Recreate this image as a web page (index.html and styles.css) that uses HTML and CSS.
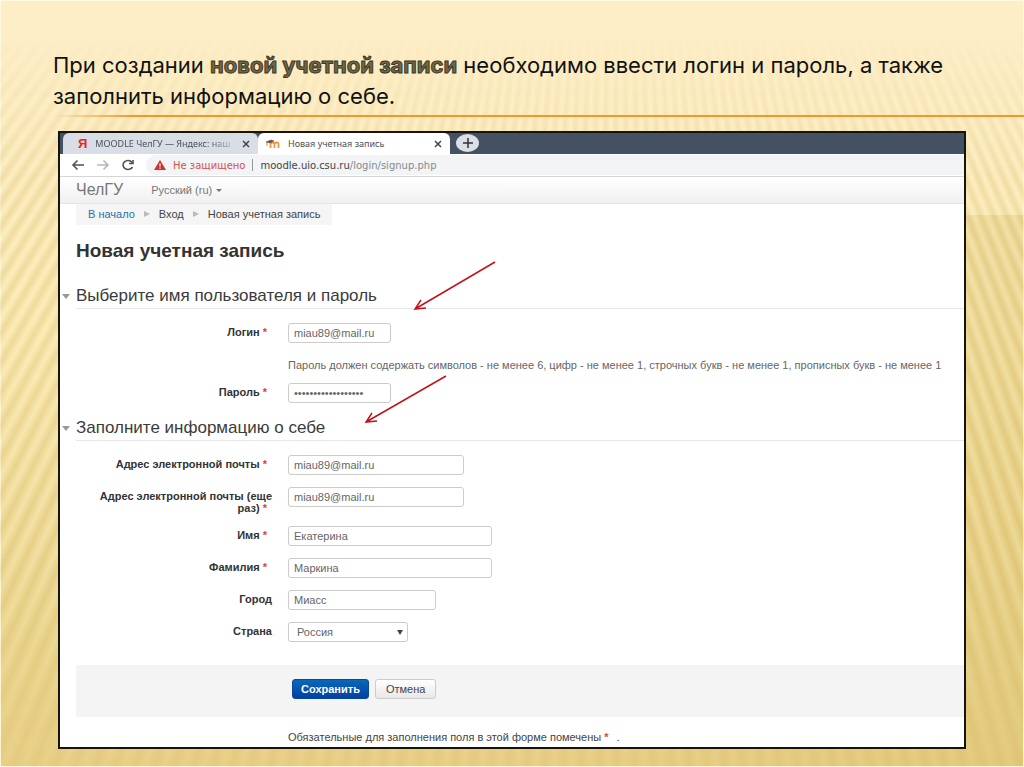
FILE: index.html
```
<!DOCTYPE html>
<html lang="ru">
<head>
<meta charset="utf-8">
<title>Новая учетная запись</title>
<link rel="stylesheet" href="styles.css">
</head>
<body>
<main class="slide">
  <h1 class="slide-title">При создании <strong>новой учетной записи</strong> необходимо ввести логин и пароль, а также заполнить информацию о себе.</h1>
  <div class="rule"></div>
  <section class="window">
    <div class="tabs">
      <div class="tab">
        <span class="yandex">Я</span>
        <span class="tab-name fade">MOODLE ЧелГУ — Яндекс: наш</span>
        <button class="close" aria-label="Закрыть"><svg viewBox="0 0 8 8"><path d="M1 1l6 6M7 1l-6 6"/></svg></button>
      </div>
      <div class="tab active">
        <svg class="moodle" viewBox="0 0 14 10"><path d="M4.500 9V5.500q0-2 2-2t2 2V9M8.500 5.500q0-2 2-2t2 2V9" fill="none" stroke="#f0953a" stroke-width="1.800"/><path d="M0 3L5 1l3 1-4 2zM1 3v4" fill="#6b5142" stroke="#6b5142" stroke-width=".6"/></svg>
        <span class="tab-name">Новая учетная запись</span>
        <button class="close" aria-label="Закрыть"><svg viewBox="0 0 8 8"><path d="M1 1l6 6M7 1l-6 6"/></svg></button>
      </div>
      <button class="new-tab" aria-label="Новая вкладка"><svg viewBox="0 0 12 12"><path d="M6 1v10M1 6h10"/></svg></button>
    </div>
    <div class="toolbar">
      <button class="nav" aria-label="Назад"><svg viewBox="0 0 14 12"><path d="M13 6H2M6.500 1.500L2 6l4.500 4.500"/></svg></button>
      <button class="nav dim" aria-label="Вперед"><svg viewBox="0 0 14 12"><path d="M1 6h11M7.500 1.500L12 6l-4.500 4.500"/></svg></button>
      <button class="nav" aria-label="Обновить"><svg viewBox="0 0 14 12"><path d="M11.500 8A5 4.500 0 1 1 11 3.200M12 1v3.500H8"/></svg></button>
      <div class="address">
        <svg class="warn" viewBox="0 0 12 10"><path d="M6 0l6 10H0z" fill="#cf342c"/><path d="M6 3.500v3M6 7.500v1.200" stroke="#fff" stroke-width="1.200"/></svg>
        <span class="unsafe">Не защищено</span>
        <span class="bar"></span>
        <span class="url">moodle.uio.csu.ru<span class="path">/login/signup.php</span></span>
      </div>
    </div>
    <header class="site">
      <a class="brand" href="#">ЧелГУ</a>
      <a class="lang" href="#">Русский (ru)<span class="caret"></span></a>
    </header>
    <div class="content">
      <nav class="crumbs">
        <a href="#">В начало</a><span class="sep"></span><span>Вход</span><span class="sep"></span><span>Новая учетная запись</span>
      </nav>
      <h2 class="page-title">Новая учетная запись</h2>
      <form class="form">
        <h3 class="legend">Выберите имя пользователя и пароль</h3>
        <div class="group">
          <div class="row"><label for="login">Логин <b class="req">*</b></label><input class="short" id="login" value="miau89@mail.ru"></div>
          <p class="hint">Пароль должен содержать символов - не менее 6, цифр - не менее 1, строчных букв - не менее 1, прописных букв - не менее 1</p>
          <div class="row"><label for="pass">Пароль <b class="req">*</b></label><input class="short" type="password" id="pass" value="passwordpassword12"></div>
        </div>
        <h3 class="legend">Заполните информацию о себе</h3>
        <div class="group about">
          <div class="row"><label for="mail">Адрес электронной почты <b class="req">*</b></label><input class="medium" id="mail" value="miau89@mail.ru"></div>
          <div class="row"><label for="mail2">Адрес электронной почты (еще раз) <b class="req">*</b></label><input class="medium" id="mail2" value="miau89@mail.ru"></div>
          <div class="row"><label for="name">Имя <b class="req">*</b></label><input class="long" id="name" value="Екатерина"></div>
          <div class="row"><label for="surname">Фамилия <b class="req">*</b></label><input class="long" id="surname" value="Маркина"></div>
          <div class="row"><label for="city">Город</label><input class="city" id="city" value="Миасс"></div>
          <div class="row"><label for="country">Страна</label><span class="select"><select id="country"><option>Россия</option></select></span></div>
        </div>
        <div class="actions">
          <button class="btn primary" type="submit">Сохранить</button>
          <button class="btn" type="button">Отмена</button>
        </div>
        <p class="note">Обязательные для заполнения поля в этой форме помечены <b class="req">*</b> .</p>
      </form>
    </div>
    <svg class="arrows" viewBox="0 0 460 180"><path d="M138 3L58 50M69 49L58 50L64 41M89 117L9 163M20 162L9 163L15 154"/></svg>
  </section>
</main>
</body>
</html>
```
FILE: styles.css
```
* { box-sizing: border-box; }
body { margin: 0; font-family: "Liberation Sans", Arial, sans-serif; font-size: 11px; color: #444; }
h1, h2, h3, p { margin: 0; font-weight: normal; }
button, input, select { font: inherit; color: inherit; margin: 0; }
a { text-decoration: none; color: inherit; }
svg { display: block; }
.slide {
  position: relative; isolation: isolate; min-height: 100vh; padding: 50px 58px 18px 53px;
  background:
    linear-gradient(90deg, transparent 50%, #d9bf6c66) 0 215px / 100% 100% no-repeat,
    linear-gradient(#fdeec8, #fdeec6 120px, #faeab4 45%, #e9d38c 85%, #e6cd84);
  box-shadow: inset 0 0 0 1px #fff9dd;
}
.slide::before {
  content: ""; position: absolute; inset: 0; z-index: -1;
  background: repeating-conic-gradient(from 0deg at 60% -700px, #cda94b40 0deg, #fff3c040 .35deg, #cda94b40 .7deg);
  mask-image: linear-gradient(transparent 30px, #000 180px, #000 550px, #0005 740px);
}
.slide-title { font-family: Inter, "Noto Sans", sans-serif; font-size: 22px; line-height: 31px; color: #111; }
.slide-title strong { font-weight: 700; color: #6f6748; -webkit-text-stroke: 1px #3d3724; }
.rule { height: 2px; margin: 3px -58px 14px 0; background: linear-gradient(90deg, transparent, #f0982c 80px); }
.window { position: relative; margin-left: 5px; background: #fff; border: 2px solid #17130d; }

.tabs { display: flex; height: 21px; background: #435163; padding-left: 3px; }
.tab { display: flex; align-items: center; width: 195px; padding: 0 8px 0 15px; gap: 8px; background: #d9dde6; border-radius: 6px 6px 0 0; font: 9px "Noto Sans", sans-serif; color: #4c5158; }
.tab.active { width: 192px; background: #fff; padding: 0 8px; }
.tab-name { flex: 1; white-space: nowrap; }
.fade { mask-image: linear-gradient(90deg, #000 80%, #0003); }
.yandex { color: #e22; font: bold 13px "Liberation Sans", sans-serif; }
.moodle { width: 14px; height: 10px; }
.close { border: 0; padding: 0; background: none; }
.close svg { width: 8px; height: 8px; stroke: #444; stroke-width: 1.500; fill: none; }
.new-tab { display: grid; place-items: center; width: 23px; height: 18px; margin: 1px 6px; padding: 0; border: 0; border-radius: 50%; background: #dbdfe6; }
.new-tab svg { width: 12px; height: 12px; fill: none; stroke: #333; stroke-width: 1.500; }

.toolbar { display: flex; align-items: center; height: 23px; padding: 0 0 0 11px; gap: 11px; border-bottom: 1px solid #d5d6d9; }
.nav { border: 0; padding: 0; background: none; }
.nav svg { width: 14px; height: 12px; fill: none; stroke: #505357; stroke-width: 1.600; }
.nav.dim svg { stroke: #b5b7ba; }
.address { flex: 1; display: flex; align-items: center; height: 20px; padding-left: 8px; border-radius: 10px 0 0 10px; background: #f2f4f6; font: 10px "DejaVu Sans", sans-serif; }
.warn { width: 12px; height: 10px; margin-right: 7px; }
.unsafe { color: #d1534c; }
.bar { width: 1px; height: 12px; margin: 0 7px; background: #999; }
.path { color: #85898d; }

.site { display: flex; align-items: center; gap: 28px; height: 27px; padding-left: 16px; background: linear-gradient(#fff, #f0f0f0); border-bottom: 1px solid #e4e4e4; color: #777; }
.brand { font-size: 16px; }
.caret { display: inline-block; border: 3px solid transparent; border-top-color: #777; border-bottom: 0; margin: 0 0 2px 4px; }

.content { padding-left: 16px; }
.crumbs { display: flex; width: fit-content; align-items: center; height: 21px; padding: 0 12px 2px; background: #f5f5f5; }
.crumbs a { color: #2374ad; }
.sep { border: 3px solid transparent; border-left: 6px solid #bbb; border-right: 0; margin: 0 9px; }
.page-title { margin-top: 15px; font-size: 19px; line-height: 22px; font-weight: bold; color: #333; }
.legend { position: relative; margin-top: 23px; height: 24px; line-height: 22px; font-size: 17px; color: #3b3b3b; border-bottom: 1px solid #e8e8e8; }
.legend::before { content: ""; position: absolute; left: -14px; top: 9px; border: 4px solid transparent; border-top: 5px solid #999; border-bottom: 0; }
.group { padding-top: 14px; }
.row { display: flex; align-items: flex-start; margin-bottom: 12px; }
.row label { width: 196px; margin-right: 16px; padding-top: 3px; line-height: 12px; font-weight: bold; text-align: right; color: #333; }
.req { color: #d8434e; font-weight: bold; margin-right: 5px; }
.row input, select { height: 20px; padding: 0 5px; border: 1px solid #ccc; border-radius: 3px; background: #fff; color: #666; }
.row .short { width: 103px; }
.row .medium { width: 176px; }
.row .long { width: 204px; }
.row .city { width: 148px; }
.select { position: relative; }
.select::after { content: ""; position: absolute; right: 5px; top: 8px; border: 3px solid transparent; border-top: 5px solid #444; border-bottom: 0; }
.row select { width: 120px; padding-left: 8px; appearance: none; }
.hint { margin: 14px 0 10px 212px; line-height: 16px; white-space: nowrap; color: #666; }
.group + .legend { margin-top: 14px; }
.actions { display: flex; gap: 6px; height: 52px; margin-top: 23px; padding: 14px 0 0 216px; background: #f4f4f4; }
.btn { height: 20px; padding: 0 10px; border: 1px solid #ccc; border-radius: 3px; background: linear-gradient(#fff, #e8e8e8); }
.btn.primary { padding: 0 8px; font-weight: bold; color: #fff; border-color: #0648a0; background: linear-gradient(#0868b8, #0440a4); }
.note { margin-left: 212px; padding: 12px 0 2px; line-height: 16px; }
.arrows { position: absolute; left: 297px; top: 126px; width: 460px; height: 180px; pointer-events: none; fill: none; stroke: #c4121a; stroke-width: 1.500; }
```
